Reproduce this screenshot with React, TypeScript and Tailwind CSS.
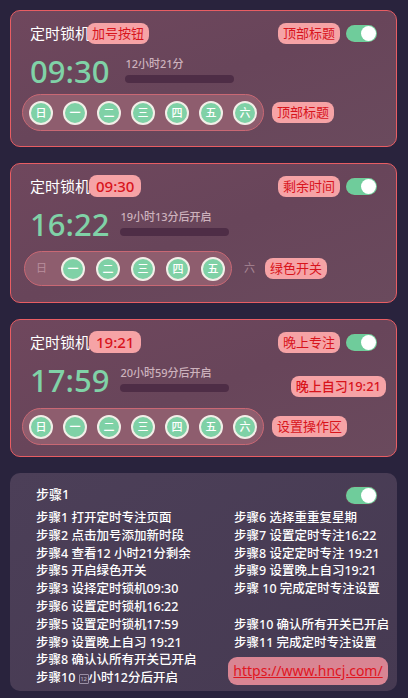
const FONT = { fontFamily: '"Noto Sans", "Noto Sans CJK SC", sans-serif' }

const DAYS = ['日', '一', '二', '三', '四', '五', '六']

function Tag({ text, className = '' }: { text: string; className?: string }) {
    return (
        <span
            className={`inline-flex items-center h-[21px] px-[5px] rounded-lg bg-[#f6a3a6] text-[#d8141c] text-[13px] leading-none ${className}`}
        >
            {text}
        </span>
    )
}

function Toggle() {
    return (
        <div className="w-[31px] h-[17px] rounded-full bg-[#6fcc9b] flex items-center justify-end pr-[1px] shadow-[0_0_0_1px_rgba(120,60,80,0.4)]">
            <div className="w-[15px] h-[15px] rounded-full bg-white" />
        </div>
    )
}

function DayDot({ d }: { d: string }) {
    return (
        <div className="w-[24px] h-[24px] rounded-full bg-[#7fd1a6] border-2 border-[#f3eee8] flex items-center justify-center text-white text-[11px] font-medium leading-none shrink-0">
            {d}
        </div>
    )
}

function Card({
    tag,
    rightTag,
    time,
    sub,
    variant,
    sideTag,
    midTag,
    pillGap,
    bottom,
}: {
    tag: string
    rightTag: string
    time: string
    sub: string
    variant: 'full' | 'partial'
    sideTag: string
    midTag?: string
    pillGap: string
    bottom: string
}) {
    const numeric = /^\d/.test(tag)
    return (
        <div className={`rounded-[10px] border border-[#e85d63] bg-gradient-to-br from-[#6f475d] via-[#68455a] to-[#6a4a5d] px-[11px] pt-[10px] ${bottom}`}>
            <div className="flex items-center h-[24px]">
                <span className="pl-[8px] text-white text-[15px] leading-none">定时锁机</span>
                <Tag
                    text={tag}
                    className={numeric ? 'ml-[-1px] h-[22px] px-[7px] text-[15px] font-medium' : 'ml-[-3px]'}
                />
                <div className="ml-auto flex items-center gap-[6px] pr-[8px]">
                    <Tag text={rightTag} />
                    <Toggle />
                </div>
            </div>
            <div className="flex items-center h-[46px] mt-[3px]">
                <span className="pl-[8px] text-[#80d2a7] text-[31px] font-medium leading-none">{time}</span>
                <div className={`flex flex-col ${variant === 'full' && !midTag ? 'ml-[16px]' : 'ml-[11px]'} mt-[-2px]`}>
                    <span className="text-[#cdb2bd] text-[11px] font-medium leading-none">{sub}</span>
                    <div className="mt-[6px] w-[109px] h-[8px] rounded-full bg-[#4e2d46]" />
                </div>
                {midTag && <Tag text={midTag} className="ml-auto mr-[-1px] mt-[12px] font-medium" />}
            </div>
            <div className={`flex items-center ${pillGap}`}>
                {variant === 'full' ? (
                    <div className="flex items-center gap-[10px] h-[37px] px-[6px] rounded-full bg-[#8e5d6e] border border-[#c96874]">
                        {DAYS.map((d) => (
                            <DayDot key={d} d={d} />
                        ))}
                    </div>
                ) : (
                    <>
                        <div className="ml-[2px] flex items-center gap-[11px] h-[35px] pl-[11px] pr-[6px] rounded-full bg-[#8e5d6e] border border-[#c96874]">
                            <span className="w-[11px] text-[#b98e9d] text-[11px] mr-[3px]">日</span>
                            {DAYS.slice(1, 6).map((d) => (
                                <DayDot key={d} d={d} />
                            ))}
                        </div>
                        <span className="ml-[12px] text-[#a98896] text-[11px]">六</span>
                    </>
                )}
                <Tag text={sideTag} className={variant === 'full' ? 'ml-[8px]' : 'ml-[10px]'} />
            </div>
        </div>
    )
}

const LEFT = [
    '步骤1 打开定时专注页面',
    '步骤2 点击加号添加新时段',
    '步骤4 查看12 小时21分剩余',
    '步骤5 开启绿色开关',
    '步骤3 设择定时锁机09:30',
    '步骤6 设置定时锁机16:22',
    '步骤5 设置定时锁机17:59',
    '步骤9 设置晚上自习 19:21',
    '步骤8 确认认所有开关已开启',
]

const RIGHT_A = [
    '步骤6 选择重重复星期',
    '步骤7 设置定时专注16:22',
    '步骤8 设定定时专注 19:21',
    '步骤9 设置晚上自习19:21',
    '步骤 10 完成定时专注设置',
]

const RIGHT_B = ['步骤10 确认所有开关已开启', '步骤11 完成定时专注设置']

export default function App() {
    return (
        <div style={FONT} className="w-[408px] min-h-[698px] bg-[#29233d] pt-[10px] pl-[10px] pr-[11px] pb-[8px] flex flex-col gap-[16px]">
            <Card tag="加号按钮" rightTag="顶部标题" time="09:30" sub="12小时21分" variant="full" sideTag="顶部标题" pillGap="mt-0" bottom="pb-[15px]" />
            <Card tag="09:30" rightTag="剩余时间" time="16:22" sub="19小时13分后开启" variant="partial" sideTag="绿色开关" pillGap="mt-[4px]" bottom="pb-[16px]" />
            <Card tag="19:21" rightTag="晚上专注" time="17:59" sub="20小时59分后开启" variant="full" sideTag="设置操作区" midTag="晚上自习19:21" pillGap="mt-[5px]" bottom="pb-[11px]" />

            <div className="rounded-[10px] bg-gradient-to-br from-[#4c3f58] to-[#463a52] pl-[26px] pr-[9px] pt-[12px] pb-[4px]">
                <div className="flex items-center justify-between pr-[11px] h-[20px]">
                    <span className="text-white text-[13px] font-medium">步骤1</span>
                    <Toggle />
                </div>
                <div className="flex text-white text-[12.5px] font-medium leading-[17.8px] mt-[4px]">
                    <div className="w-[198px] shrink-0 flex flex-col">
                        {LEFT.map((t) => (
                            <span key={t} className="whitespace-nowrap">{t}</span>
                        ))}
                        <span className="whitespace-nowrap">
                            步骤10{' '}
                            <span className="inline-flex items-center justify-center w-[10px] h-[10px] border border-[#9a8fa5] text-[6px] leading-none text-[#b0a6ba] align-middle rounded-[1px]">
                                12
                            </span>
                            小时12分后开启
                        </span>
                    </div>
                    <div className="flex flex-col min-w-0">
                        {RIGHT_A.map((t) => (
                            <span key={t} className="whitespace-nowrap">{t}</span>
                        ))}
                        <span className="h-[17.8px]" />
                        {RIGHT_B.map((t) => (
                            <span key={t} className="whitespace-nowrap">{t}</span>
                        ))}
                        <a
                            href="#"
                            className="mt-[6px] ml-[-6px] w-[160px] h-[28px] flex items-center justify-center rounded-[9px] bg-[#d98593] text-[#e0161f] underline text-[14px] font-normal"
                        >
                            https://www.hncj.com/
                        </a>
                    </div>
                </div>
            </div>
        </div>
    )
}
